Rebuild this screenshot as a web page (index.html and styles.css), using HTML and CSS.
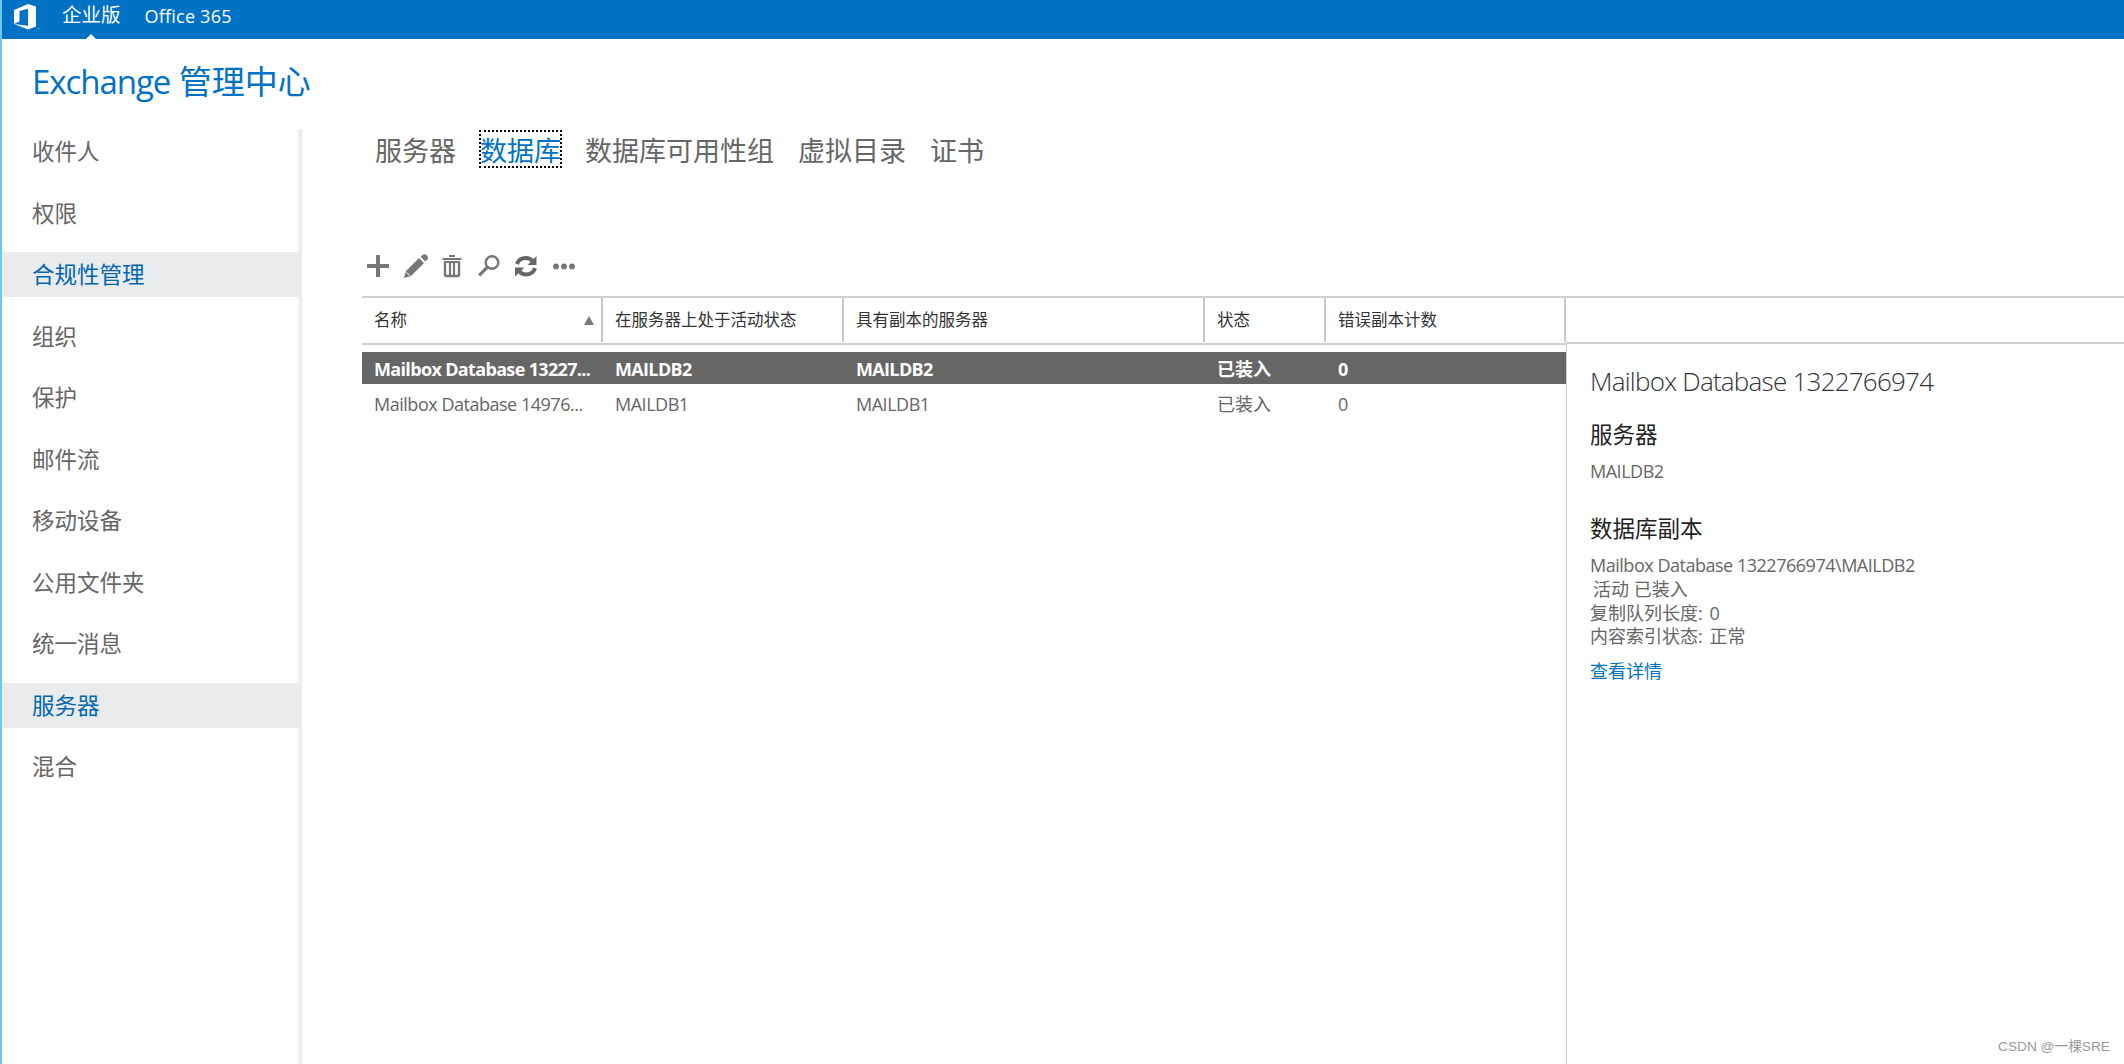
FILE: index.html
```
<!DOCTYPE html>
<html lang="zh-CN">
<head>
    <meta charset="UTF-8">
    <title>Exchange 管理中心</title>
    <link rel="stylesheet" href="styles.css">
</head>
<body>
    <header class="topbar">
        <svg class="logo" width="27" height="28" viewBox="0 0 27 28">
            <path d="M1 6 L15 0 L23 2.5 V22.5 L15 25.5 L1 20 L15 21.7 V4.8 L6.5 7 V17.5 L1 20 Z" fill="#fff"/>
            <circle cx="25.5" cy="24.5" r="0.8" fill="#7db8e6"/>
        </svg>
        <a class="top-link current" href="#">企业版</a>
        <a class="top-link" href="#">Office 365</a>
    </header>

    <h1 class="title"><span class="title-en">Exchange</span> 管理中心</h1>

    <div class="layout">
        <nav class="sidebar">
            <a class="nav-item" href="#">收件人</a>
            <a class="nav-item" href="#">权限</a>
            <a class="nav-item active" href="#">合规性管理</a>
            <a class="nav-item" href="#">组织</a>
            <a class="nav-item" href="#">保护</a>
            <a class="nav-item" href="#">邮件流</a>
            <a class="nav-item" href="#">移动设备</a>
            <a class="nav-item" href="#">公用文件夹</a>
            <a class="nav-item" href="#">统一消息</a>
            <a class="nav-item active" href="#">服务器</a>
            <a class="nav-item" href="#">混合</a>
        </nav>

        <main class="content">
            <div class="tabs">
                <a class="tab" href="#">服务器</a>
                <a class="tab selected" href="#">数据库</a>
                <a class="tab" href="#">数据库可用性组</a>
                <a class="tab" href="#">虚拟目录</a>
                <a class="tab" href="#">证书</a>
            </div>

            <div class="toolbar">
                <!-- New -->
                <svg width="24" height="24" viewBox="0 0 24 24"><path d="M1 12H23M12 1V23" stroke="#777" stroke-width="4"/></svg>
                <!-- Edit -->
                <svg width="24" height="24" viewBox="0 0 24 24"><path d="M2 17 L15 4 L20 9 L7 22 L0 24 Z M16.5 2.8 L18.5 1 Q21 -0.5 23 1.5 Q25 4 23 6 L21.3 7.6 Z" fill="#777"/><path d="M2.5 18.5 L6 21.7" stroke="#fff" stroke-width="1"/></svg>
                <!-- Delete -->
                <svg width="20" height="24" viewBox="0 0 20 24"><path d="M7 2H13M0.5 5H19.5" stroke="#777" stroke-width="2"/><path d="M3 8V20.5Q3 22 4.5 22H15.5Q17 22 17 20.5V8" fill="none" stroke="#777" stroke-width="2.4"/><path d="M2 8H18M8 8V22M12 8V22" stroke="#777" stroke-width="2.2"/></svg>
                <!-- Search -->
                <svg width="22" height="24" viewBox="0 0 22 24"><circle cx="14" cy="8.5" r="6.3" fill="none" stroke="#777" stroke-width="2.4"/><path d="M9.5 13L1.2 21.3" stroke="#777" stroke-width="3.2"/></svg>
                <!-- Refresh -->
                <svg width="24" height="24" viewBox="0 0 24 24"><path d="M3 10Q5 4 12 4Q16 4 18.5 7M21 14Q19 20.5 12 20.5Q8 20.5 5.5 17.5" fill="none" stroke="#666" stroke-width="4"/><path d="M22.5 2V11H13.5Z M1 22.5V13.5H10.5Z" fill="#666"/></svg>
                <!-- More -->
                <svg width="24" height="24" viewBox="0 0 24 24"><circle cx="4" cy="12.5" r="2.9" fill="#777"/><circle cx="12" cy="12.5" r="2.9" fill="#777"/><circle cx="20" cy="12.5" r="2.9" fill="#777"/></svg>
            </div>

            <div class="panes">
                <div class="grid">
                    <div class="row head">
                        <div class="cell">名称<span class="sort"></span></div>
                        <div class="cell">在服务器上处于活动状态</div>
                        <div class="cell">具有副本的服务器</div>
                        <div class="cell">状态</div>
                        <div class="cell">错误副本计数</div>
                    </div>
                    <div class="row picked">
                        <div class="cell en">Mailbox Database 13227...</div>
                        <div class="cell en">MAILDB2</div>
                        <div class="cell en">MAILDB2</div>
                        <div class="cell">已装入</div>
                        <div class="cell en">0</div>
                    </div>
                    <div class="row">
                        <div class="cell en">Mailbox Database 14976...</div>
                        <div class="cell en">MAILDB1</div>
                        <div class="cell en">MAILDB1</div>
                        <div class="cell">已装入</div>
                        <div class="cell en">0</div>
                    </div>
                </div>

                <aside class="details">
                    <div class="details-head"></div>
                    <div class="details-body">
                        <h2>Mailbox Database 1322766974</h2>
                        <h3>服务器</h3>
                        <p class="en">MAILDB2</p>
                        <h3 class="copies">数据库副本</h3>
                        <p class="en">Mailbox Database 1322766974\MAILDB2</p>
                        <p class="indent">活动 已装入</p>
                        <p class="stat">复制队列长度: 0</p>
                        <p class="stat">内容索引状态: 正常</p>
                        <a class="more" href="#">查看详情</a>
                    </div>
                </aside>
            </div>
        </main>
    </div>
    <div class="watermark">CSDN @一棵SRE</div>
</body>
</html>
```

FILE: styles.css
```
* {
    box-sizing: border-box;
}

body {
    margin: 0;
    height: 1064px;
    display: flex;
    flex-direction: column;
    border-left: 2px solid #6ac9ee;
    font-family: "Open Sans", "Noto Sans CJK SC", sans-serif;
    font-size: 18px;
    color: #666;
    background: #fff;
    overflow: hidden;
}

a {
    color: inherit;
    text-decoration: none;
}

.en {
    letter-spacing: -0.48px;
}

.topbar {
    height: 39px;
    flex: none;
    display: flex;
    padding-left: 11px;
    background: #0072c6;
    color: #fff;
}

.logo {
    margin: 4px 22px 0 0;
}

.top-link {
    position: relative;
    height: 39px;
    line-height: 33px;
    font-size: 18px;
    letter-spacing: 0.22px;
}

.current {
    font-size: 19.5px;
    line-height: 30px;
    letter-spacing: 0;
    margin-right: 24px;
}

.current::after {
    content: "";
    position: absolute;
    left: 24px;
    bottom: 0;
    border: 5px solid transparent;
    border-top: 0;
    border-bottom-color: #fff;
}

.title {
    flex: none;
    margin: 0;
    height: 90px;
    padding-left: 30px;
    font-size: 33px;
    line-height: 85px;
    font-weight: 400;
    color: #0072c6;
}

.title-en {
    letter-spacing: -1.05px;
}

.layout {
    flex: 1;
    min-height: 0;
    display: flex;
}

.sidebar {
    width: 300px;
    flex: none;
    display: flex;
    flex-direction: column;
    gap: 16.5px;
    background: linear-gradient(to left, #e6e6e6, #fff 6px);
}

.nav-item {
    height: 45px;
    flex: none;
    padding-left: 30px;
    line-height: 45px;
    font-size: 22.5px;
}

.nav-item.active {
    background: #eaebed;
    color: #0067b0;
}

.content {
    flex: 1;
    display: flex;
    flex-direction: column;
    padding-left: 60px;
}

.tabs {
    display: flex;
    gap: 24px;
    padding: 2px 0 0 13px;
}

.tab {
    height: 36px;
    line-height: 39px;
    font-size: 27px;
}

.tab.selected {
    color: #0072c6;
    outline: 2px dotted #000;
    outline-offset: -1px;
}

.toolbar {
    display: flex;
    gap: 14px;
    height: 43px;
    margin-top: 87px;
    padding-left: 4px;
}

.toolbar svg:nth-child(4) {
    margin-left: 2px;
}

.panes {
    flex: 1;
    display: flex;
}

.grid {
    width: 1204px;
    flex: none;
}

.row {
    display: grid;
    grid-template-columns: 241px 241px 361px 121px 1fr;
    height: 32px;
    line-height: 34px;
    margin-top: 3px;
}

.head {
    height: 49px;
    margin: 0 0 7px;
    border-top: 2px solid #cbd0d5;
    border-bottom: 2px solid #cbd0d5;
    font-size: 16.5px;
    line-height: 43px;
    color: #333;
}

.cell {
    position: relative;
    padding-left: 12px;
    white-space: nowrap;
}

.head .cell {
    border-right: 2px solid #c8c8c8;
    margin-bottom: 1px;
}

.picked {
    background: #666;
    color: #fff;
    font-weight: 700;
}

.picked .en {
    letter-spacing: -0.66px;
}

.sort {
    position: absolute;
    right: 7px;
    top: 18px;
    border: 5.5px solid transparent;
    border-top: 0;
    border-bottom: 9px solid #777;
}

.details {
    flex: 1;
}

.details-head {
    height: 48px;
    border-top: 2px solid #cbd0d5;
    border-bottom: 2px solid #cbd0d5;
}

.details-body {
    height: 720px;
    padding: 21px 0 0 23px;
    border-left: 1px solid #c3cdd6;
}

h2 {
    margin: 0 0 21px;
    font-size: 26px;
    line-height: 32px;
    font-weight: 300;
    letter-spacing: -0.76px;
    color: #333;
}

h3 {
    margin: 0 0 8px;
    font-size: 22.5px;
    line-height: 34px;
    font-weight: 400;
    color: #222;
}

.copies {
    margin-top: 28px;
}

p {
    margin: 0;
    line-height: 23.5px;
}

.indent {
    margin-top: 1px;
    padding-left: 3px;
}

.stat {
    word-spacing: 2px;
}

.more {
    display: block;
    margin-top: 10px;
    line-height: 24px;
    color: #0072c6;
}

.watermark {
    position: absolute;
    right: 14px;
    bottom: 7px;
    font-family: "Liberation Sans", "Noto Sans CJK SC", sans-serif;
    font-size: 13.7px;
    line-height: 20px;
    color: #999;
}
```
